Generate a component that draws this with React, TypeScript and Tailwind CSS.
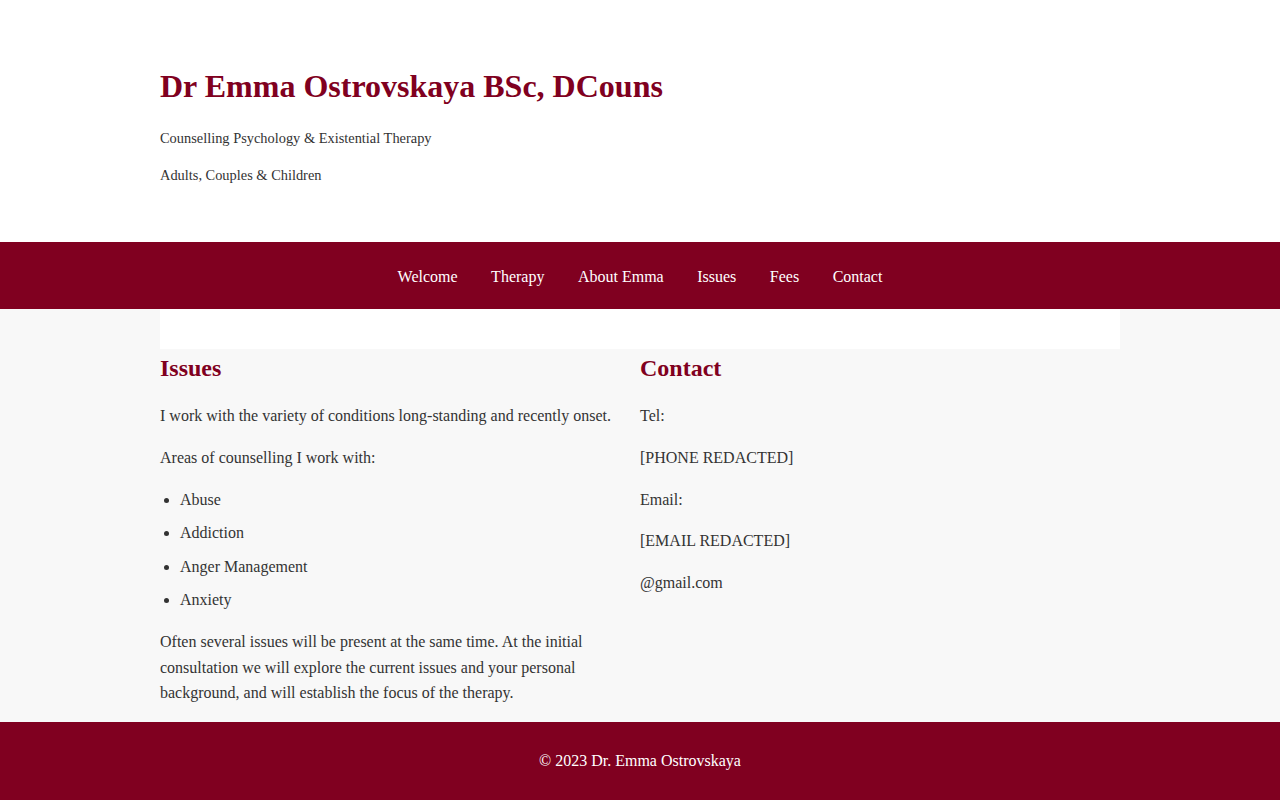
import React from "react";

const navLinks = ["Welcome", "Therapy", "About Emma", "Issues", "Fees", "Contact"];
const issues = ["Abuse", "Addiction", "Anger Management", "Anxiety"];

const App: React.FC = () => {
  return (
    <div className="min-h-screen bg-[#f8f8f8] text-[#333] font-['Liberation_Serif',serif]">
      {/* Header */}
      <header className="bg-white">
        <div className="w-[960px] mx-auto pt-[66px] pb-[55.5px]">
          <h1 className="text-[32px] leading-[40px] font-bold text-[#800020]">
            Dr Emma Ostrovskaya BSc, DCouns
          </h1>
          <p className="text-[14.4px] leading-[23px] mt-[20.5px]">
            Counselling Psychology &amp; Existential Therapy
          </p>
          <p className="text-[14.4px] leading-[23px] mt-[14px]">
            Adults, Couples &amp; Children
          </p>
        </div>
      </header>

      {/* Nav */}
      <nav className="bg-[#800020] h-[67px] pt-[2px] flex items-center justify-center">
        <ul className="flex gap-[33.5px]">
          {navLinks.map((link) => (
            <li key={link}>
              <a href="#" className="text-white text-[16px] leading-[25.6px]">
                {link}
              </a>
            </li>
          ))}
        </ul>
      </nav>

      <main className="w-[960px] mx-auto">
        <div className="h-10 bg-white" />

        <div className="grid grid-cols-2 text-[16px] leading-[25.6px]">
          {/* Issues */}
          <section className="pr-5">
            <h2 className="text-[24px] leading-[38.4px] font-bold text-[#800020] mb-4">
              Issues
            </h2>
            <p className="mb-4">
              I work with the variety of conditions long-standing and recently onset.
            </p>
            <p className="mb-4">Areas of counselling I work with:</p>
            <ul className="list-disc pl-5 mb-4 space-y-2">
              {issues.map((item) => (
                <li key={item}>{item}</li>
              ))}
            </ul>
            <p className="mb-4">
              Often several issues will be present at the same time. At the initial
              consultation we will explore the current issues and your personal
              background, and will establish the focus of the therapy.
            </p>
          </section>

          {/* Contact */}
          <section>
            <h2 className="text-[24px] leading-[38.4px] font-bold text-[#800020] mb-4">
              Contact
            </h2>
            <p className="mb-4">Tel:</p>
            <p className="mb-4">[PHONE REDACTED]</p>
            <p className="mb-4">Email:</p>
            <p className="mb-4">[EMAIL REDACTED]</p>
            <p className="mb-4">@gmail.com</p>
          </section>
        </div>
      </main>

      {/* Footer */}
      <footer className="bg-[#800020] h-[78px] flex items-center justify-center">
        <p className="text-white text-[16px] leading-[25.6px]">
          © 2023 Dr. Emma Ostrovskaya
        </p>
      </footer>
    </div>
  );
};

export default App;
